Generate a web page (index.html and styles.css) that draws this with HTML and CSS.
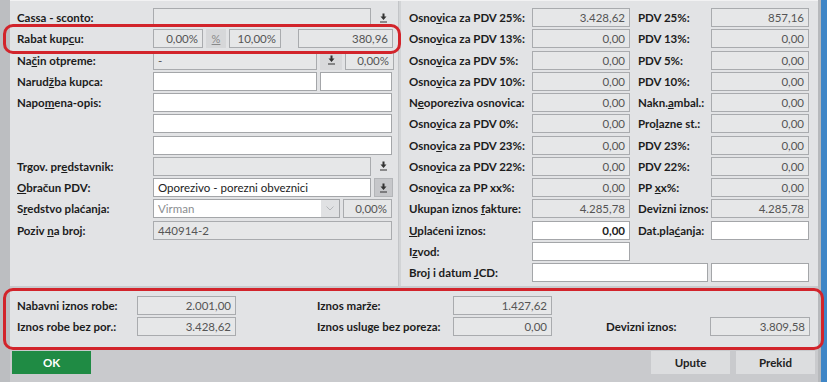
FILE: index.html
```html
<!doctype html>
<html>
<head>
    <meta charset="utf-8">
    <link rel="stylesheet" href="styles.css">
</head>
<body>

<div class="window">
    <div class="strip"></div>

    <div class="main">
        <div class="top">
            <section class="panel left-panel">
                <div class="row">
                    <label class="lbl">Cassa - sconto:</label>
                    <div class="fld grey w218"></div>
                    <button class="pick"><svg viewBox="0 0 9 10"><path d="M4.5 7 L1.5 3.5 H3.5 V0.5 H5.5 V3.5 H7.5 Z M1 8.5 H8 V9.5 H1 Z"/></svg></button>
                </div>
                <div class="row">
                    <label class="lbl">Rabat kup<u>c</u>u:</label>
                    <div class="fld grey w50">0,00%</div>
                    <button class="pct"><u>%</u></button>
                    <div class="fld grey w52">10,00%</div>
                    <div class="fld grey w95 push">380,96</div>
                </div>
                <div class="row">
                    <label class="lbl">Na<u>č</u>in otpreme:</label>
                    <div class="fld grey w164 left">-</div>
                    <button class="pick wide"><svg viewBox="0 0 9 10"><path d="M4.5 7 L1.5 3.5 H3.5 V0.5 H5.5 V3.5 H7.5 Z M1 8.5 H8 V9.5 H1 Z"/></svg></button>
                    <div class="fld grey w49">0,00%</div>
                </div>
                <div class="row">
                    <label class="lbl">Narud<u>ž</u>ba kupca:</label>
                    <div class="fld white w164"></div>
                    <div class="fld white w72"></div>
                </div>
                <div class="row">
                    <label class="lbl">Napo<u>m</u>ena-opis:</label>
                    <div class="fld white w239"></div>
                </div>
                <div class="row">
                    <span class="lbl"></span>
                    <div class="fld white w239"></div>
                </div>
                <div class="row">
                    <span class="lbl"></span>
                    <div class="fld white w239"></div>
                </div>
                <div class="row">
                    <label class="lbl">Trgov. pr<u>e</u>dstavnik:</label>
                    <div class="fld grey w218"></div>
                    <button class="pick"><svg viewBox="0 0 9 10"><path d="M4.5 7 L1.5 3.5 H3.5 V0.5 H5.5 V3.5 H7.5 Z M1 8.5 H8 V9.5 H1 Z"/></svg></button>
                </div>
                <div class="row">
                    <label class="lbl"><u>O</u>bračun PDV:</label>
                    <div class="fld white w218 left dark">Oporezivo - porezni obveznici</div>
                    <button class="pick pressed"><svg viewBox="0 0 9 10"><path d="M4.5 7 L1.5 3.5 H3.5 V0.5 H5.5 V3.5 H7.5 Z M1 8.5 H8 V9.5 H1 Z"/></svg></button>
                </div>
                <div class="row">
                    <label class="lbl">S<u>r</u>edstvo plaćanja:</label>
                    <div class="fld white w187 select">
                        <span class="select-text">Virman</span>
                        <span class="select-arrow"><svg viewBox="0 0 8 5"><path d="M0.5 0.5 L4 4 L7.5 0.5" fill="none"/></svg></span>
                    </div>
                    <div class="fld grey w49">0,00%</div>
                </div>
                <div class="row">
                    <label class="lbl">Poziv <u>n</u>a broj:</label>
                    <div class="fld grey w239 left">440914-2</div>
                </div>
            </section>

            <div class="divider"></div>

            <section class="panel right-panel">
                <div class="row">
                    <label class="lbl lbl-a">Osno<u>v</u>ica za PDV 25%:</label>
                    <div class="fld grey w98">3.428,62</div>
                    <label class="lbl lbl-b">PDV 25%:</label>
                    <div class="fld grey w98">857,16</div>
                </div>
                <div class="row">
                    <label class="lbl lbl-a">Osno<u>v</u>ica za PDV 13%:</label>
                    <div class="fld grey w98">0,00</div>
                    <label class="lbl lbl-b">PDV 13%:</label>
                    <div class="fld grey w98">0,00</div>
                </div>
                <div class="row">
                    <label class="lbl lbl-a">Osno<u>v</u>ica za PDV 5%:</label>
                    <div class="fld grey w98">0,00</div>
                    <label class="lbl lbl-b">PDV 5%:</label>
                    <div class="fld grey w98">0,00</div>
                </div>
                <div class="row">
                    <label class="lbl lbl-a">Osno<u>v</u>ica za PDV 10%:</label>
                    <div class="fld grey w98">0,00</div>
                    <label class="lbl lbl-b">PDV 10%:</label>
                    <div class="fld grey w98">0,00</div>
                </div>
                <div class="row">
                    <label class="lbl lbl-a">N<u>e</u>oporeziva osnovica:</label>
                    <div class="fld grey w98">0,00</div>
                    <label class="lbl lbl-b">Nakn.<u>a</u>mbal.:</label>
                    <div class="fld grey w98">0,00</div>
                </div>
                <div class="row">
                    <label class="lbl lbl-a">Osno<u>v</u>ica za PDV 0%:</label>
                    <div class="fld grey w98">0,00</div>
                    <label class="lbl lbl-b">Pro<u>l</u>azne st.:</label>
                    <div class="fld grey w98">0,00</div>
                </div>
                <div class="row">
                    <label class="lbl lbl-a">Osno<u>v</u>ica za PDV 23%:</label>
                    <div class="fld grey w98">0,00</div>
                    <label class="lbl lbl-b">PDV 23%:</label>
                    <div class="fld grey w98">0,00</div>
                </div>
                <div class="row">
                    <label class="lbl lbl-a">Osno<u>v</u>ica za PDV 22%:</label>
                    <div class="fld grey w98">0,00</div>
                    <label class="lbl lbl-b">PDV 22%:</label>
                    <div class="fld grey w98">0,00</div>
                </div>
                <div class="row">
                    <label class="lbl lbl-a">Osno<u>v</u>ica za PP xx%:</label>
                    <div class="fld grey w98">0,00</div>
                    <label class="lbl lbl-b">PP <u>x</u>x%:</label>
                    <div class="fld grey w98">0,00</div>
                </div>
                <div class="row">
                    <label class="lbl lbl-a">Ukupan iznos <u>f</u>akture:</label>
                    <div class="fld grey w98">4.285,78</div>
                    <label class="lbl lbl-b">Devizni iznos:</label>
                    <div class="fld grey w98">4.285,78</div>
                </div>
                <div class="row">
                    <label class="lbl lbl-a"><u>U</u>plaćeni iznos:</label>
                    <div class="fld white w98 dark bold">0,00</div>
                    <label class="lbl lbl-b">Dat.pla<u>ć</u>anja:</label>
                    <div class="fld white w98"></div>
                </div>
                <div class="row">
                    <label class="lbl lbl-a">I<u>z</u>vod:</label>
                    <div class="fld white w98"></div>
                </div>
                <div class="row">
                    <label class="lbl lbl-a">Broj i datum <u>J</u>CD:</label>
                    <div class="fld white w176"></div>
                    <div class="fld white w98"></div>
                </div>
            </section>
        </div>

        <section class="totals">
            <div class="row">
                <label class="lbl lbl-t1">Nabavni iznos robe:</label>
                <div class="fld grey w99">2.001,00</div>
                <label class="lbl lbl-t2">Iznos marže:</label>
                <div class="fld grey w99">1.427,62</div>
            </div>
            <div class="row">
                <label class="lbl lbl-t1">Iznos robe bez por.:</label>
                <div class="fld grey w99">3.428,62</div>
                <label class="lbl lbl-t2">Iznos usluge bez poreza:</label>
                <div class="fld grey w99">0,00</div>
                <label class="lbl lbl-t3">Devizni iznos:</label>
                <div class="fld grey w100">3.809,58</div>
            </div>
        </section>

        <div class="buttons">
            <button class="btn btn-ok">OK</button>
            <span class="spacer"></span>
            <button class="btn">Upute</button>
            <button class="btn">Prekid</button>
        </div>
    </div>

    <div class="edge"></div>
</div>

<div class="mark mark-rabat"></div>
<div class="mark mark-totals"></div>

</body>
</html>
```

FILE: styles.css
```css
html,
body {
    width: 100%;
    height: 100%;
    padding: 0;
    margin: 0;
}

body {
    position: relative;
    overflow: hidden;
    background: #c9cacd;
    font-family: Lato, "Open Sans", sans-serif;
    font-size: 11.5px;
    color: #1c1c1c;
}

.window {
    display: flex;
    width: 827px;
    height: 382px;
}

.strip {
    width: 10px;
    background: #bcbec1;
}

.main {
    display: flex;
    flex-direction: column;
    width: 808px;
}

.edge {
    width: 9px;
    background: linear-gradient(to right, #b7b9bc 0, #b7b9bc 3px, #3f86c6 3px);
}

.top {
    display: flex;
    height: 285px;
    border-top: 1px solid #f2f2f3;
}

.panel {
    background: #e2e3e5;
}

.left-panel {
    width: 388px;
    padding: 7px 0 0 7px;
    box-sizing: border-box;
}

.divider {
    width: 3px;
    background: linear-gradient(to right, #c3c5c8 0, #c3c5c8 1px, #d2d4d6 1px);
}

.right-panel {
    flex: 1;
    padding: 7px 0 0 8px;
    box-sizing: border-box;
}

.row {
    display: flex;
    align-items: center;
    height: 19px;
    margin-bottom: 2px;
}

.panel .row {
    margin-bottom: 2.25px;
}

.lbl {
    flex: none;
    font-weight: bold;
    white-space: nowrap;
}

.left-panel .lbl {
    width: 136px;
}

.lbl-a {
    width: 123px;
}

.lbl-b {
    width: 73px;
    margin-left: 8px;
}

.fld {
    flex: none;
    height: 19px;
    box-sizing: border-box;
    padding: 0 4px;
    line-height: 17px;
    text-align: right;
    color: #555;
    white-space: nowrap;
    overflow: hidden;
}

.fld + .fld,
.fld + button,
button + .fld {
    margin-left: 3px;
}

.grey {
    background: #e6e7e8;
    border: 1px solid #a9abae;
}

.white {
    background: #fff;
    border: 1px solid #a4a6a9;
}

.left {
    text-align: left;
}

.dark {
    color: #222;
}

.bold {
    font-weight: bold;
}

.push {
    margin-left: 17px !important;
}

.w49 { width: 49px; }
.w50 { width: 50px; }
.w52 { width: 52px; }
.w72 { width: 72px; }
.w95 { width: 95px; }
.w98 { width: 98px; }
.w99 { width: 99px; }
.w100 { width: 100px; }
.w164 { width: 164px; }
.w176 { width: 176px; }
.w187 { width: 187px; }
.w218 { width: 218px; }
.w239 { width: 239px; }

button {
    font-family: inherit;
}

.pick {
    flex: none;
    width: 19px;
    height: 19px;
    margin-left: 3px;
    padding: 0;
    border: 0;
    background: transparent;
    display: flex;
    align-items: center;
    justify-content: center;
}

.pick.wide {
    width: 22px;
    background: #d8d9db;
}

.pick svg {
    width: 9px;
    height: 10px;
    fill: #333;
}

.pick.pressed {
    background: #c6c7ca;
    border: 1px solid #b3b5b8;
}

.pct {
    flex: none;
    width: 20px;
    height: 19px;
    margin-left: 3px;
    padding: 0;
    border: 0;
    background: #d6d7d9;
    color: #888;
    font-size: 11px;
}

.pct + .fld {
    margin-left: 3px;
}

.select {
    display: flex;
    padding: 0;
}

.select-text {
    flex: 1;
    text-align: left;
    padding-left: 4px;
    color: #8b8d90;
}

.select-arrow {
    width: 18px;
    background: #e0e1e3;
    display: flex;
    align-items: center;
    justify-content: center;
}

.select-arrow svg {
    width: 8px;
    height: 5px;
    stroke: #b4b6b9;
}

.totals {
    margin-top: 3px;
    height: 59px;
    padding: 7px 0 0 7px;
    box-sizing: border-box;
    background: #e2e3e5;
}

.lbl-t1 {
    width: 120px;
}

.lbl-t2 {
    width: 136px;
    margin-left: 81px;
}

.lbl-t3 {
    width: 104px;
    margin-left: 54px;
}

.buttons {
    display: flex;
    padding: 3px 3px 0 2px;
}

.spacer {
    flex: 1;
}

.btn {
    width: 79px;
    height: 23px;
    border: 0;
    background: #dcdddf;
    font-weight: bold;
    font-size: 11.5px;
    color: #222;
}

.btn + .btn {
    margin-left: 6px;
}

.btn-ok {
    background: #1f8b44;
    color: #fff;
}

.mark {
    position: absolute;
    border: 3px solid #d2242b;
    border-radius: 10px;
    box-sizing: border-box;
}

.mark-rabat {
    left: 3px;
    top: 24px;
    width: 398px;
    height: 30px;
}

.mark-totals {
    left: 3px;
    top: 288px;
    width: 821px;
    height: 62px;
}
```
